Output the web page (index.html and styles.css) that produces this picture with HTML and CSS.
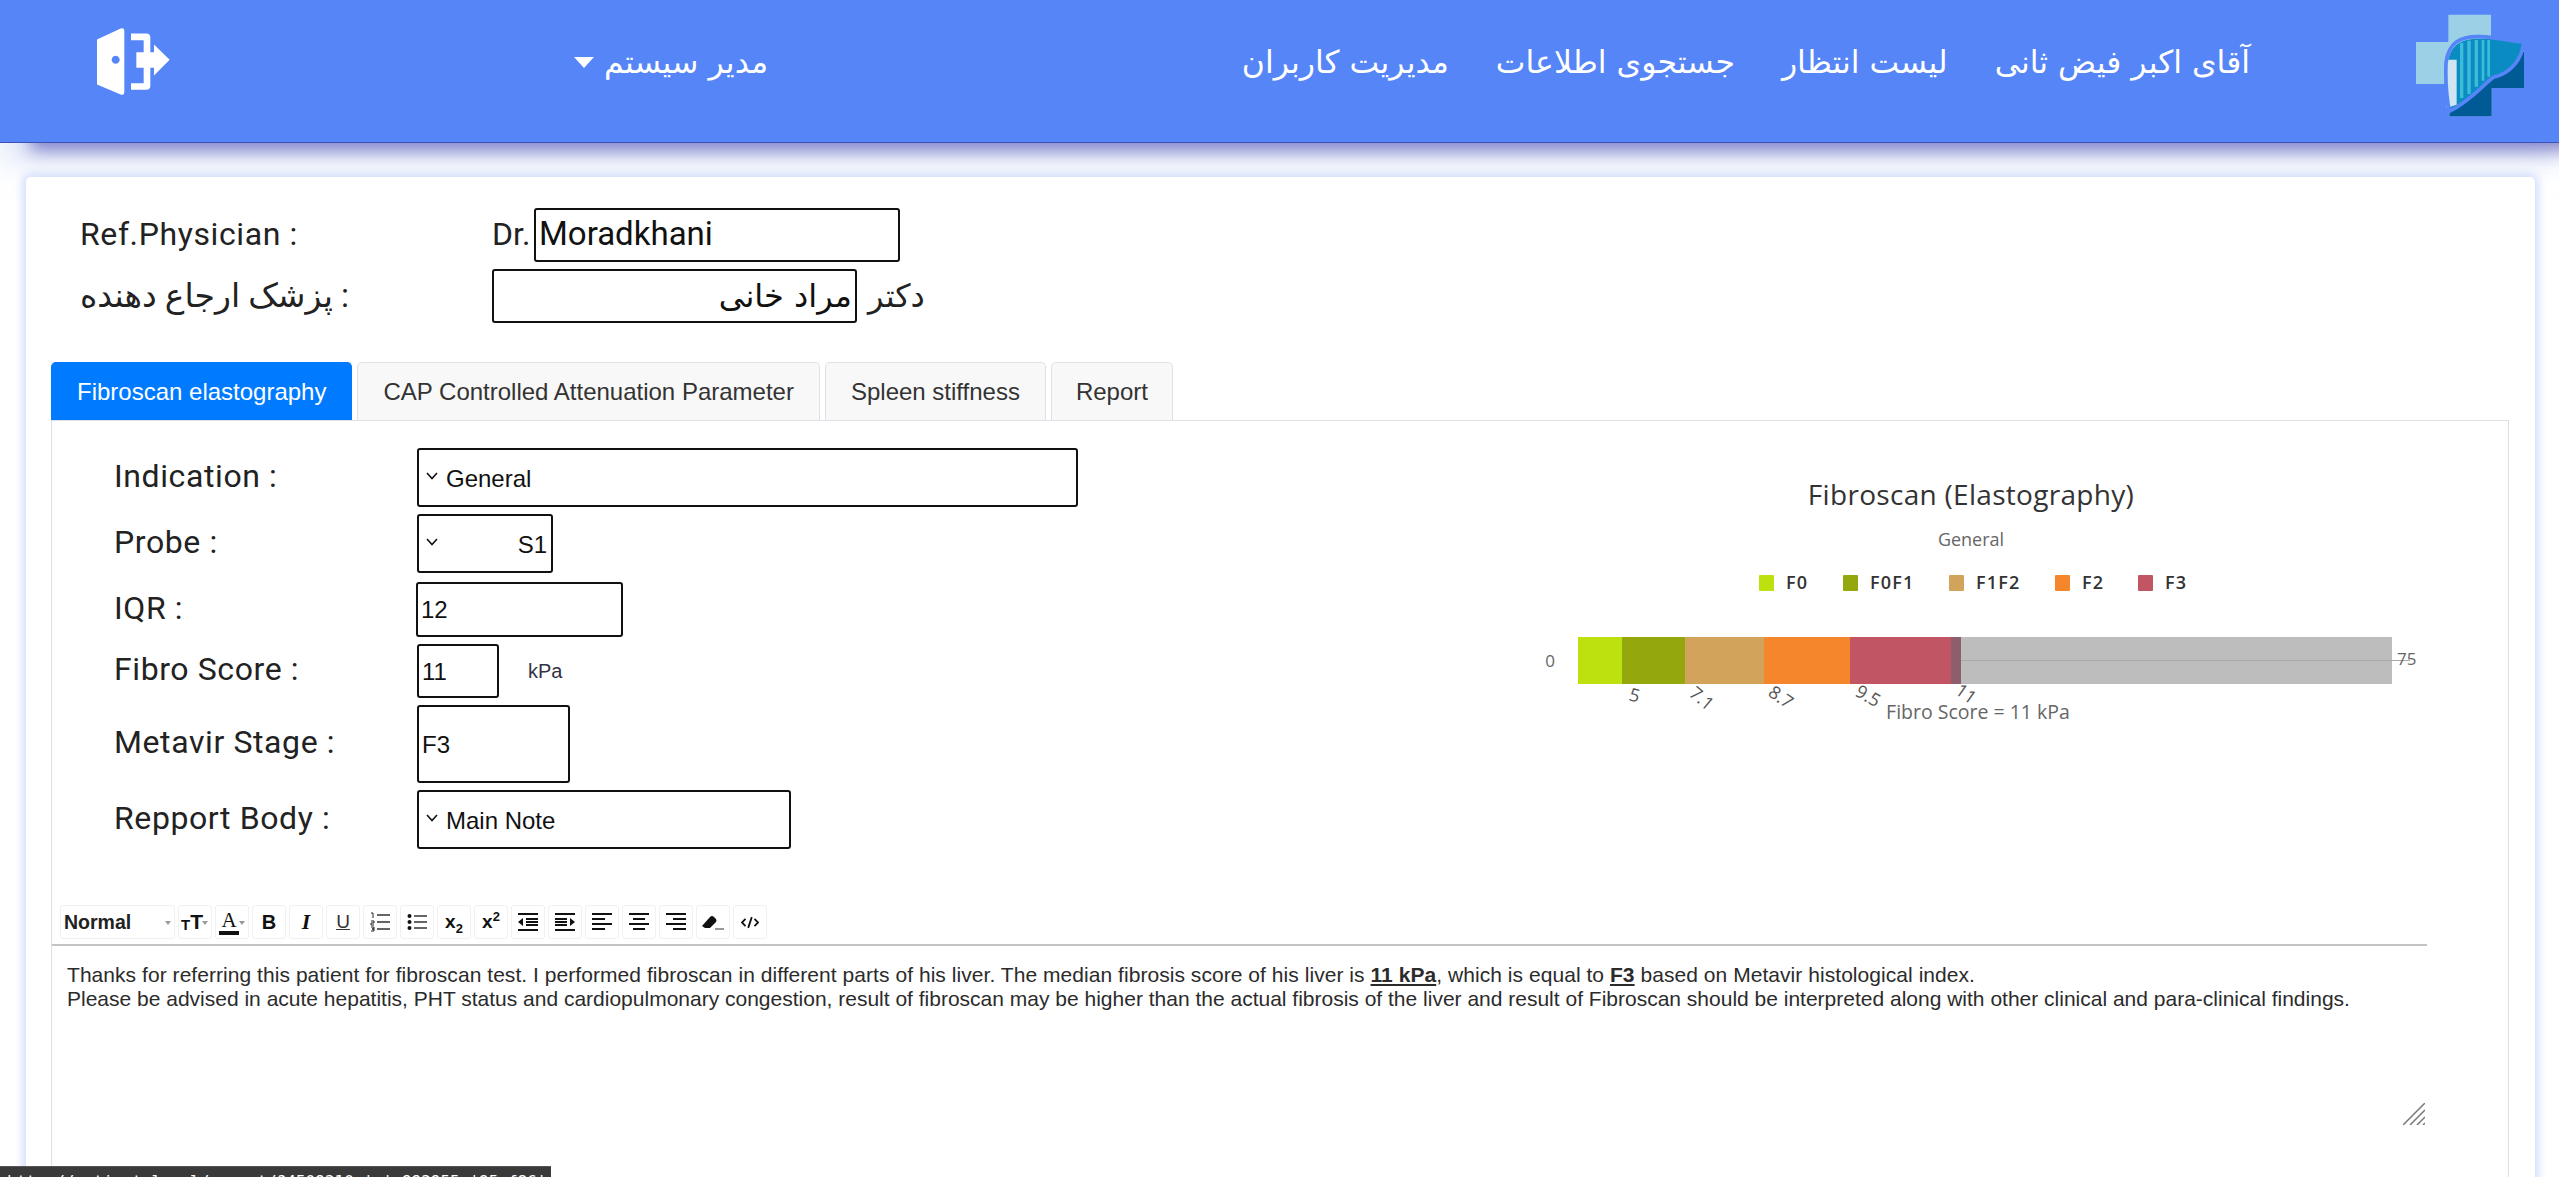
FILE: index.html
```html
<!DOCTYPE html>
<html lang="fa">
<head>
<meta charset="utf-8">
<title>Fibroscan</title>
<link rel="stylesheet" href="styles.css">
</head>
<body>
<header class="topbar">
  <a class="logout" href="#" aria-label="logout">
    <svg viewBox="100 20 240 215" width="80" height="72">
      <path fill="#fff" fill-rule="evenodd" d="M112 60 L183 27 Q194 23 194 36 V215 Q194 229 183 225 L112 195 Z M168 109 a12 12 0 1 0 .01 0 Z"/>
      <path fill="#fff" d="M214 42 H260 Q272 42 272 54 V98 H252 V62 H214 Z M214 211 H260 Q272 211 272 199 V145 H252 V191 H214 Z M230 98 H283 V75 L330 121 L283 168 V145 H230 Z"/>
    </svg>
  </a>
  <div class="usermenu"><span class="caret"></span><span>مدیر سیستم</span></div>
  <nav class="nav">
    <a href="#">مدیریت کاربران</a>
    <a href="#">جستجوی اطلاعات</a>
    <a href="#">لیست انتظار</a>
    <a href="#">آقای اکبر فیض ثانی</a>
  </nav>
  <svg class="logo" viewBox="105 35 330 315" width="110" height="105">
    <path fill="#9bd0e6" d="M205 40 H333 V122 H432 V248 H335 V345 H208 V248 H108 V122 H205 Z"/>
    <path fill="#005a96" d="M335 230 L432 150 V260 H335 V345 H208 L210 320 Z"/>
    <path fill="#0a8cc2" d="M200 210 C205 130 240 112 300 112 C350 112 400 120 428 122 C428 170 410 205 340 228 C310 250 270 295 212 322 Z"/>
    <path fill="#cfe6f2" d="M200 175 h30 v135 l-30 10z"/>
    <path fill="#3cbcd8" d="M240 125 h10 v165 h-10z M262 118 h10 v160 h-10z M284 116 h10 v140 h-10z M305 116 h8 v122 h-8z M322 116 h8 v110 h-8z"/>
    <path fill="none" stroke="#5585f7" stroke-width="11" d="M208 330 C270 300 310 250 340 228 C395 215 428 170 430 122 C390 118 350 108 300 106 C240 104 205 125 198 185 C196 240 200 290 208 330 Z"/>
  </svg>
</header>

<main class="page">
  <section class="card">
    <div class="ref">
      <div class="ref-row">
        <span class="ref-label">Ref.Physician :</span>
        <span class="ref-prefix">Dr.</span>
        <input class="box ref-en" value="Moradkhani">
      </div>
      <div class="ref-row ref-row-fa">
        <span class="ref-label">پزشک ارجاع دهنده :</span>
        <input class="box ref-fa" dir="rtl" value="مراد خانی">
        <span class="ref-suffix">دکتر</span>
      </div>
    </div>

    <div class="tabs">
      <a class="tab active" href="#">Fibroscan elastography</a>
      <a class="tab" href="#">CAP Controlled Attenuation Parameter</a>
      <a class="tab" href="#">Spleen stiffness</a>
      <a class="tab" href="#">Report</a>
    </div>

    <div class="panel">
      <div class="panel-top">
        <form class="fields">
          <div class="field f-indication">
            <span class="f-label">Indication :</span>
            <label class="sel w-indication">
              <svg class="chev" viewBox="0 0 12 8" width="12" height="8"><path d="M1 1 L6 6.5 L11 1" fill="none" stroke="#111" stroke-width="1.6"/></svg>
              <select><option>General</option></select>
            </label>
          </div>
          <div class="field f-probe">
            <span class="f-label">Probe :</span>
            <label class="sel w-probe">
              <svg class="chev" viewBox="0 0 12 8" width="12" height="8"><path d="M1 1 L6 6.5 L11 1" fill="none" stroke="#111" stroke-width="1.6"/></svg>
              <select dir="rtl"><option>S1</option></select>
            </label>
          </div>
          <div class="field f-iqr">
            <span class="f-label">IQR :</span>
            <input class="box num w-iqr" value="12">
          </div>
          <div class="field f-score">
            <span class="f-label">Fibro Score :</span>
            <input class="box num w-score" value="11">
            <span class="unit">kPa</span>
          </div>
          <div class="field f-stage">
            <span class="f-label">Metavir Stage :</span>
            <input class="box num w-stage" value="F3">
          </div>
          <div class="field f-body">
            <span class="f-label">Repport Body :</span>
            <label class="sel w-body">
              <svg class="chev" viewBox="0 0 12 8" width="12" height="8"><path d="M1 1 L6 6.5 L11 1" fill="none" stroke="#111" stroke-width="1.6"/></svg>
              <select><option>Main Note</option></select>
            </label>
          </div>
        </form>

        <svg class="chart" viewBox="1500 448 950 300" width="950" height="300">
          <text class="c-title" x="1971" y="505" text-anchor="middle">Fibroscan (Elastography)</text>
          <text class="c-sub" x="1971" y="546" text-anchor="middle">General</text>

          <rect x="1759" y="575" width="15" height="16" rx="1" fill="#bde10f"/>
          <text class="c-leg" x="1786" y="589">F0</text>
          <rect x="1843" y="575" width="15" height="16" rx="1" fill="#94a80e"/>
          <text class="c-leg" x="1870" y="589">F0F1</text>
          <rect x="1949" y="575" width="15" height="16" rx="1" fill="#d2a35a"/>
          <text class="c-leg" x="1976" y="589">F1F2</text>
          <rect x="2055" y="575" width="15" height="16" rx="1" fill="#f6862b"/>
          <text class="c-leg" x="2082" y="589">F2</text>
          <rect x="2138" y="575" width="15" height="16" rx="1" fill="#c15564"/>
          <text class="c-leg" x="2165" y="589">F3</text>

          <rect x="1578" y="637" width="814" height="47" fill="#bdbdbd"/>
          <rect x="1578" y="637" width="44" height="47" fill="#bde10f"/>
          <rect x="1622" y="637" width="63" height="47" fill="#94a80e"/>
          <rect x="1685" y="637" width="79" height="47" fill="#d2a35a"/>
          <rect x="1764" y="637" width="86" height="47" fill="#f6862b"/>
          <rect x="1850" y="637" width="101" height="47" fill="#c15564"/>
          <rect x="1951" y="637" width="10" height="47" fill="#8f5e6c"/>
          <rect x="1961" y="660" width="449" height="1" fill="#a8a8a8"/>

          <text class="c-axis" x="1550" y="667" text-anchor="middle">0</text>
          <text class="c-axis" x="2397" y="665">75</text>
          <text class="c-tick" transform="translate(1628 700) rotate(15)">5</text>
          <text class="c-tick" transform="translate(1688 695) rotate(40)">7.1</text>
          <text class="c-tick" transform="translate(1767 695) rotate(35)">8.7</text>
          <text class="c-tick" transform="translate(1854 695) rotate(30)">9.5</text>
          <text class="c-tick" transform="translate(1954 693) rotate(35)">11</text>
          <text class="c-foot" x="1978" y="719" text-anchor="middle">Fibro Score = 11 kPa</text>
        </svg>
      </div>

      <div class="toolbar">
        <div class="tb tb-style"><span>Normal</span><i class="tri"></i></div>
        <div class="tb tb-size"><span class="t-small">T</span><span class="t-big">T</span><i class="tri"></i></div>
        <div class="tb tb-color"><span class="a-wrap">A</span><i class="tri"></i></div>
        <div class="tb tb-text"><b>B</b></div>
        <div class="tb tb-text"><b class="ital">I</b></div>
        <div class="tb tb-text"><span class="under">U</span></div>
        <div class="tb">
          <svg viewBox="0 0 20 20" width="20" height="20"><path d="M7 3h13M7 10h13M7 17h13" stroke="#333" stroke-width="1.6"/><path d="M1 1h2v5M1 9h3v2H1v2h3M1 15h3v2H2h2v2H1" fill="none" stroke="#222" stroke-width="1"/></svg>
        </div>
        <div class="tb">
          <svg viewBox="0 0 20 20" width="20" height="20"><path d="M7 4h13M7 10h13M7 16h13" stroke="#333" stroke-width="1.6"/><circle cx="2.5" cy="4" r="2" fill="#111"/><circle cx="2.5" cy="10" r="2" fill="#111"/><circle cx="2.5" cy="16" r="2" fill="#111"/></svg>
        </div>
        <div class="tb tb-script"><span>x<sub>2</sub></span></div>
        <div class="tb tb-script"><span>x<sup>2</sup></span></div>
        <div class="tb">
          <svg viewBox="0 0 20 20" width="20" height="20"><path d="M0 2h20M8 7h12M8 10h12M8 13h12M0 18h20" stroke="#111" stroke-width="2"/><path d="M5 6 V14 L0 10 Z" fill="#111"/></svg>
        </div>
        <div class="tb">
          <svg viewBox="0 0 20 20" width="20" height="20"><path d="M0 2h20M0 7h12M0 10h12M0 13h12M0 18h20" stroke="#111" stroke-width="2"/><path d="M15 6 V14 L20 10 Z" fill="#111"/></svg>
        </div>
        <div class="tb">
          <svg viewBox="0 0 20 20" width="20" height="20"><path d="M0 2h20M0 7h13M0 12h20M0 17h13" stroke="#111" stroke-width="2.2"/></svg>
        </div>
        <div class="tb">
          <svg viewBox="0 0 20 20" width="20" height="20"><path d="M0 2h20M4 7h12M0 12h20M4 17h12" stroke="#111" stroke-width="2.2"/></svg>
        </div>
        <div class="tb">
          <svg viewBox="0 0 20 20" width="20" height="20"><path d="M0 2h20M7 7h13M0 12h20M7 17h13" stroke="#111" stroke-width="2.2"/></svg>
        </div>
        <div class="tb">
          <svg viewBox="0 0 24 20" width="24" height="20"><path d="M1 14 L9 5 Q11 3 13 5 L15 7 Q16 9 15 10 L9 16 H4 Z" fill="#111"/><path d="M14 17h9" stroke="#777" stroke-width="1.5"/></svg>
        </div>
        <div class="tb">
          <svg viewBox="0 0 20 14" width="18" height="13"><path d="M5 3 L1 7 L5 11 M15 3 L19 7 L15 11 M12 1 L8 13" fill="none" stroke="#111" stroke-width="2"/></svg>
        </div>
      </div>

      <div class="editor">
        <p class="line-first">Thanks for referring this patient for fibroscan test. I performed fibroscan in different parts of his liver. The median fibrosis score of his liver is <b class="u">11 kPa</b>, which is equal to <b class="u">F3</b> based on Metavir histological index.</p>
        <p>Please be advised in acute hepatitis, PHT status and cardiopulmonary congestion, result of fibroscan may be higher than the actual fibrosis of the liver and result of Fibroscan should be interpreted along with other clinical and para-clinical findings.</p>
        <svg class="resizer" viewBox="0 0 22 22" width="22" height="22"><path d="M0 22 L22 0 M7 22 L22 7 M14 22 L22 14 M20 22 L22 20" stroke="#777" stroke-width="1.5" fill="none"/></svg>
      </div>
    </div>
  </section>
</main>

<div class="statusbar">http://patient.local/report/?4509210 | | 992955 |95-f86|</div>
</body>
</html>
```
FILE: styles.css
```css
* { box-sizing: border-box; }
html, body { margin: 0; height: 1177px; overflow: hidden; background: #fff; }
body { font-family: "Liberation Sans", "DejaVu Sans", sans-serif; color: #111; }

.topbar {
  height: 143px;
  display: flex;
  align-items: center;
  padding: 0 34px 18px 93px;
  background: #5585f7;
  border-bottom: 1px solid #3d50b5;
  box-shadow: 24px 14px 16px -6px rgba(70, 70, 175, .62), 0 22px 24px 0 rgba(205, 218, 245, .55);
  position: relative;
  z-index: 2;
}
.logout { display: flex; width: 80px; }
.logout svg { display: block; }
.usermenu {
  margin-left: 401px;
  display: flex;
  align-items: center;
  gap: 10px;
  color: #fff;
  font: 31.5px "DejaVu Sans", sans-serif;
}
.caret { width: 0; height: 0; border: 10px solid transparent; border-top: 11px solid #fff; border-bottom: 0; }
.nav { margin-left: auto; display: flex; gap: 47px; }
.nav a { color: #fff; text-decoration: none; font: 31.5px "DejaVu Sans", sans-serif; }
.logo { margin-left: 165px; margin-top: 6px; flex: none; }

.page { padding: 34px 24px 0 26px; background: #fff; }
.card {
  background: #fff;
  border-radius: 5px;
  padding: 31px 25px 0;
  box-shadow: 0 0 10px 3px #cfdafb;
  height: 1100px;
  position: relative;
  z-index: 3;
}

.ref { padding-left: 29px; }
.ref-row { display: flex; align-items: center; height: 54px; }
.ref-row-fa { margin-top: 7px; }
.ref-label { width: 412px; font: 32px Roboto, "DejaVu Sans", sans-serif; letter-spacing: .6px; color: #222; flex: none; padding-bottom: 2px; }
.ref-row-fa .ref-label { font-size: 33px; letter-spacing: 0; }
.ref-prefix { width: 42px; font: 32px Roboto, sans-serif; color: #222; padding-bottom: 2px; }
.ref-suffix { margin-left: 11px; font: 32px "DejaVu Sans", sans-serif; color: #222; }
.box {
  border: 2px solid #111;
  border-radius: 3px;
  background: #fff;
  color: #111;
  outline: none;
  display: block;
}
.ref-en { width: 366px; height: 54px; font: 33px Roboto, sans-serif; padding: 0 3px 3px; }
.ref-fa { width: 365px; height: 54px; font: 32px "DejaVu Sans", sans-serif; padding: 0 3px; }

.tabs { display: flex; gap: 5px; margin-top: 39px; height: 58px; }
.tab {
  display: flex;
  align-items: center;
  padding: 0 25px;
  font-size: 24px;
  color: #333;
  text-decoration: none;
  background: #f8f8f8;
  border: 1px solid #dee2e6;
  border-bottom: 0;
  border-radius: 5px 5px 0 0;
}
.tab.active { background: #007bff; color: #fff; border-color: #007bff; }
.tab:last-child { padding: 0 24px; }

.panel { border: 1px solid #dee2e6; width: 2458px; height: 900px; padding-top: 27px; }
.panel-top { display: flex; justify-content: space-between; padding-right: 58px; }
.fields { padding-left: 62px; height: 429px; }
.field { display: flex; align-items: center; height: 59px; margin-bottom: 7px; }
.f-iqr { height: 55px; margin-top: 9px; }
.f-score { height: 54px; }
.f-stage { height: 78px; }
.f-label { width: 303px; flex: none; font: 32px Roboto, sans-serif; letter-spacing: .6px; color: #222; padding-bottom: 4px; }
.sel {
  display: flex;
  align-items: center;
  height: 100%;
  border: 2px solid #111;
  border-radius: 3px;
  padding: 0 4px 0 7px;
  gap: 8px;
  background: #fff;
}
.sel select {
  appearance: none;
  border: 0;
  background: transparent;
  flex: 1;
  min-width: 0;
  font: 24px "Liberation Sans", sans-serif;
  color: #111;
  outline: none;
  padding: 2px 0 0;
}
.chev { flex: none; margin-bottom: 4px; }
.w-indication { width: 661px; }
.w-probe { width: 136px; }
.w-body { width: 374px; }
.num { height: 100%; font: 24px "Liberation Sans", sans-serif; padding: 1px 3px 0; }
.w-iqr { width: 207px; margin-left: -1px; }
.w-score { width: 82px; }
.w-stage { width: 153px; }
.unit { margin-left: 29px; font-size: 20px; color: #334; }

.chart { display: block; flex: none; font-family: "Open Sans", sans-serif; }
.c-title { font-size: 28px; letter-spacing: .3px; fill: #333; }
.c-sub { font-size: 18px; fill: #666; }
.c-leg { font-size: 18px; font-weight: 600; fill: #333; letter-spacing: 1.2px; }
.c-axis { font-size: 17px; fill: #666; }
.c-tick { font-size: 18px; fill: #555; }
.c-foot { font-size: 19.5px; fill: #666; }

.toolbar { display: flex; gap: 3px; padding: 28px 0 0 8px; height: 69px; width: 2375px; border-bottom: 2px solid #c4c4c4; }
.tb {
  width: 34px;
  height: 34px;
  display: flex;
  align-items: center;
  justify-content: center;
  background: #fff;
  border: 1px solid #f1f1f1;
  border-radius: 3px;
  font-size: 20px;
  color: #111;
  position: relative;
}
.tb-style { width: 115px; justify-content: flex-start; padding-left: 3px; font-weight: 700; font-size: 19.5px; color: #222; }
.tri { position: absolute; right: 3px; top: 15px; border: 3px solid transparent; border-top: 4px solid #999; border-bottom: 0; }
.t-small { font-size: 15px; font-weight: 700; margin-top: 4px; }
.t-big { font-size: 21px; font-weight: 700; margin-right: 6px; }
.a-wrap { font-family: "Liberation Serif", serif; font-size: 21px; line-height: 22px; border-bottom: 4px solid #111; padding: 0 2px; margin-right: 6px; }
.ital { font-style: italic; font-family: "Liberation Serif", serif; font-size: 22px; }
.under { text-decoration: underline; font-size: 19px; color: #333; }
.tb-script { font-size: 19px; font-weight: 700; }
.tb-script sub, .tb-script sup { font-size: 13px; line-height: 0; }

.editor { position: relative; width: 2375px; height: 180px; padding: 17px 15px; font-size: 21px; line-height: 24px; color: #2b2b2b; }
.editor p { margin: 0; white-space: nowrap; }
.editor .line-first { letter-spacing: .05px; }
.u { text-decoration: underline; }
.resizer { position: absolute; right: 2px; top: 157px; }

.statusbar {
  position: fixed;
  left: 0;
  bottom: 0;
  width: 551px;
  height: 11px;
  overflow: hidden;
  background: #3a3a3a;
  border-top: 1px solid #555;
  color: #fff;
  font: 16px/20px "DejaVu Sans Mono", monospace;
  padding: 5px 0 0 7px;
  white-space: pre;
  z-index: 5;
}
```
